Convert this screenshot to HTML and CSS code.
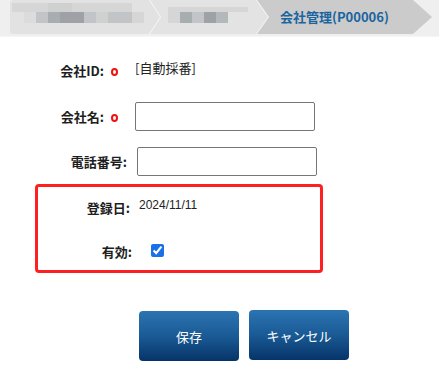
FILE: index.html
```html
<!DOCTYPE html>
<html lang="ja">
<head>
<meta charset="utf-8">
<title>会社管理</title>
<link rel="stylesheet" href="styles.css">
</head>
<body>
<div class="header">
  <div class="crumbs">
    <div class="cw c1w">
      <div class="crumb c1">
        <div class="mos top"><i class="g1 w36"></i><i class="g2 w24"></i><i class="g1 w60"></i></div>
        <div class="mos bot"><i class="g0 w12"></i><i class="g3 w12"></i><i class="g5 w12"></i><i class="g6 w12"></i><i class="g6 w12"></i><i class="g3 w12"></i><i class="g2 w12"></i><i class="g3 w12"></i><i class="g3 w12"></i><i class="g1 w12"></i></div>
      </div>
    </div>
    <div class="cw c2w">
      <div class="crumb c2">
        <div class="mos top2"><i class="g1 w80"></i></div>
        <div class="mos bot2"><i class="g1 w12"></i><i class="g5 w12"></i><i class="g3 w12"></i><i class="g6 w12"></i><i class="g4 w12"></i></div>
      </div>
    </div>
    <div class="crumb c3"><span class="cur">会社管理(P00006)</span></div>
  </div>
</div>

<div class="form">
  <div class="row r1">
    <span class="lbl l1">会社ID:</span><span class="req"></span>
    <span class="val v1">[自動採番]</span>
  </div>
  <div class="row r2">
    <span class="lbl l2">会社名:</span><span class="req"></span>
    <input class="txt t2" type="text">
  </div>
  <div class="row r3">
    <span class="lbl l3">電話番号:</span>
    <input class="txt t3" type="text">
  </div>
  <div class="box">
    <div class="row r4">
      <span class="lbl l4">登録日:</span>
      <span class="val date">2024/11/11</span>
    </div>
    <div class="row r5">
      <span class="lbl l5">有効:</span>
      <input class="chk" type="checkbox" checked>
    </div>
  </div>
  <div class="btns">
    <button class="btn save">保存</button>
    <button class="btn cancel">キャンセル</button>
  </div>
</div>
</body>
</html>
```
FILE: styles.css
```css
* { box-sizing: border-box; }
html, body { margin: 0; padding: 0; background: #fff; }
body {
  font-family: "Noto Sans CJK JP", "Noto Sans", sans-serif;
  font-size: 13px;
  color: #222;
  width: 439px;
  height: 378px;
  overflow: hidden;
}

/* header / breadcrumb */
.header {
  height: 37px;
  background: #efefef;
  border-bottom: 1px solid #f6f6f6;
  padding-left: 10px;
}
.crumbs { display: flex; height: 34px; }
.cw { filter: drop-shadow(1.5px 0 0 #f7f7f7); position: relative; }
.crumb { height: 34px; }
.c1w { z-index: 3; }
.c2w { z-index: 2; margin-left: -10px; }
.c1 {
  width: 150px;
  background: #e2e2e2;
  border-radius: 3px 0 0 3px;
  clip-path: polygon(0 0, 139px 0, 150px 17px, 139px 34px, 0 34px);
  padding-top: 3px;
}
.c2 {
  width: 118px;
  background: #e3e3e3;
  clip-path: polygon(0 0, 106px 0, 118px 17px, 106px 34px, 0 34px);
  padding-top: 7px;
}
.c3 {
  margin-left: -12px;
  width: 176px;
  background: #cbcbcb;
  clip-path: polygon(0 0, 157px 0, 176px 17px, 157px 34px, 0 34px);
  display: flex;
  align-items: center;
  padding-left: 24px;
  padding-bottom: 2px;
}
.cur { color: #1a64a0; font-weight: bold; font-size: 13px; }

.mos { display: flex; }
.mos i { display: block; }
.top { height: 9px; margin-left: 2px; }
.bot { height: 11px; margin-left: 14px; }
.top2 { height: 5px; margin-left: 18px; }
.bot2 { height: 11px; margin-left: 18px; }
.w12 { width: 12px; }
.w24 { width: 24px; }
.w36 { width: 36px; }
.w60 { width: 60px; }
.w80 { width: 80px; }
.g0 { background: #dcdcdc; }
.g1 { background: #d6d6d6; }
.g2 { background: #cfd0d0; }
.g3 { background: #c2c5c7; }
.g4 { background: #b3b8ba; }
.g5 { background: #a8adb0; }
.g6 { background: #9ea2a6; }

/* form */
.form { padding: 0; }
.row { display: flex; align-items: center; }
.lbl { display: inline-block; text-align: right; font-weight: bold; color: #1e1e1e; }
.req {
  display: inline-block;
  width: 7px;
  height: 8px;
  border: 2.5px solid #f01010;
  border-radius: 50%;
  margin-left: 7px;
  margin-top: 3px;
}
.r1 { height: 30px; margin-top: 18px; }
.r2 { height: 29px; margin-top: 17px; }
.r3 { height: 29px; margin-top: 16px; }
.l1 { width: 104px; }
.l2 { width: 104px; }
.l3 { width: 127px; }
.v1 { margin-left: 17px; margin-bottom: 5px; }
.txt {
  width: 180px;
  height: 29px;
  border: 1px solid #767676;
  border-radius: 2px;
  background: #fff;
  margin: 0;
  padding: 0 4px;
}
.t2 { margin-left: 17px; }
.t3 { margin-left: 10px; }

.box {
  margin-top: 8px;
  margin-left: 35px;
  width: 288px;
  height: 89px;
  border: 3px solid #fe2020;
  border-radius: 4px;
  padding-top: 5px;
}
.r4 { height: 30px; }
.r5 { height: 30px; margin-top: 14px; }
.l4 { width: 92px; }
.l5 { width: 94px; }
.date {
  font-family: "Liberation Sans", Arial, sans-serif;
  font-size: 12px;
  margin-left: 9px;
  margin-bottom: 4px;
}
.chk {
  margin: 0 0 2px 19px;
  width: 13px;
  height: 13px;
  accent-color: #1a70e6;
}

.btns {
  display: flex;
  gap: 10px;
  margin-top: 37px;
  padding-left: 139px;
}
.btn {
  width: 100px;
  height: 50px;
  border: none;
  border-radius: 4px;
  background: linear-gradient(to bottom, #2b74b2 0%, #1a5a95 50%, #063468 100%);
  color: #fff;
  font-family: "Noto Sans CJK JP", sans-serif;
  font-size: 13px;
  padding: 0;
  margin: 0;
}
.save { margin-top: 1px; }
```
